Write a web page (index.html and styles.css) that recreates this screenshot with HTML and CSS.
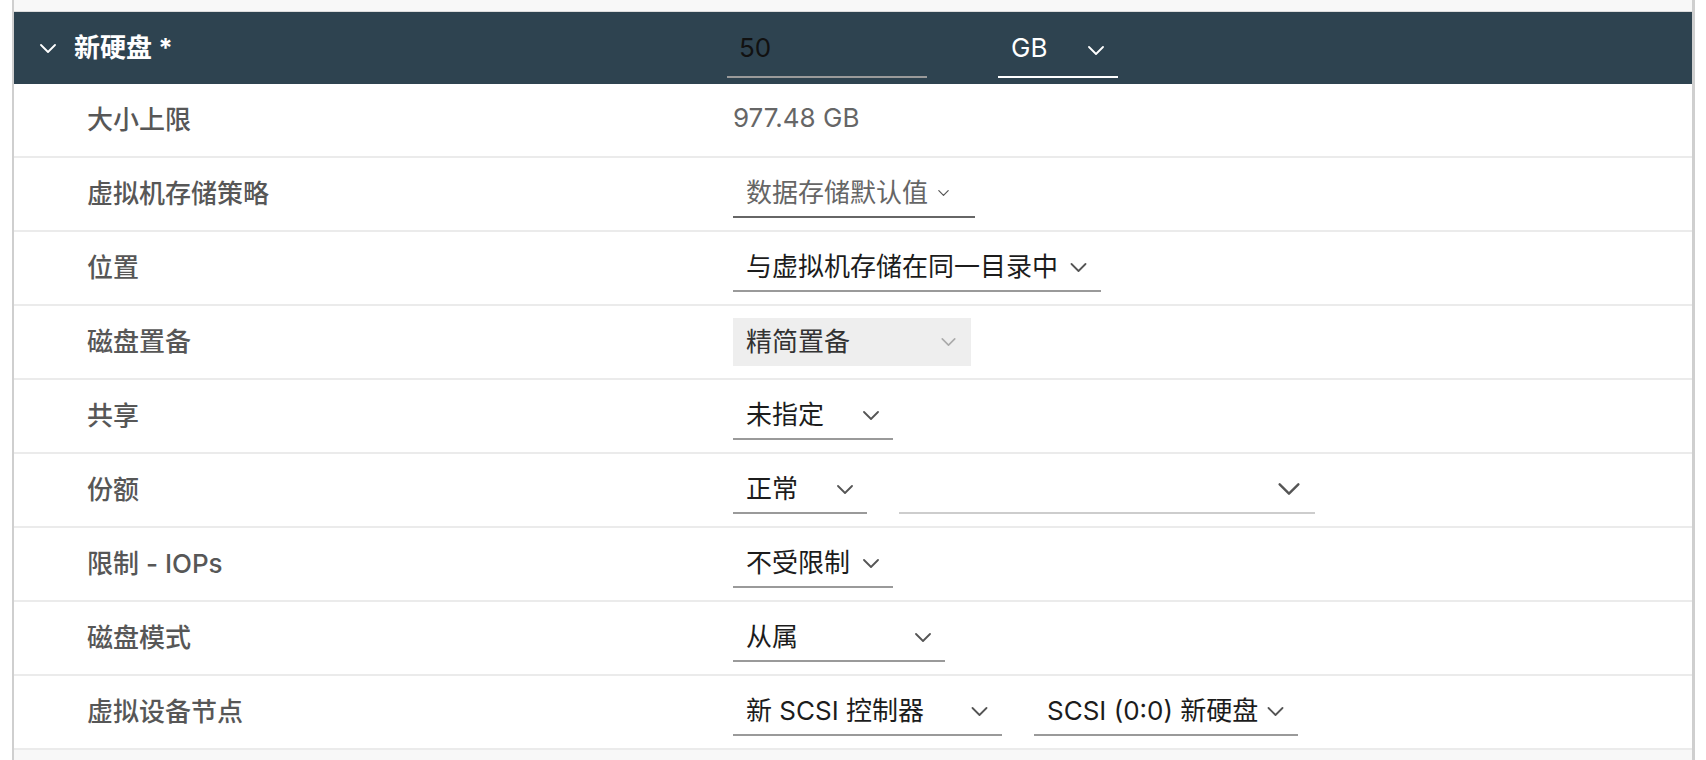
FILE: index.html
```html
<!DOCTYPE html>
<html lang="zh-CN">
<head>
  <meta charset="UTF-8">
  <meta name="viewport" content="width=device-width, initial-scale=1.0">
  <title>新硬盘</title>
  <link rel="stylesheet" href="styles.css">
</head>
<body>
  <div class="frame">
    <div class="disk">
      <!-- 标题行：名称 + 容量 -->
      <div class="disk-head">
        <span class="caret">
          <svg viewBox="0 0 16 9" width="16" height="9"><path d="M1 1 L8 8 L15 1"/></svg>
        </span>
        <span class="disk-title">新硬盘 *</span>
        <div class="size-input"><span>50</span></div>
        <div class="unit-select">
          <span>GB</span>
          <svg class="chev" viewBox="0 0 16 9" width="16" height="9"><path d="M1 1 L8 8 L15 1"/></svg>
        </div>
      </div>

      <div class="row">
        <div class="label">大小上限</div>
        <div class="value plain">977.48 GB</div>
      </div>

      <div class="row">
        <div class="label">虚拟机存储策略</div>
        <div class="value">
          <div class="select policy">
            <span class="muted">数据存储默认值</span>
            <svg class="chev small" viewBox="0 0 16 9" width="11" height="6"><path d="M1 1 L8 8 L15 1"/></svg>
          </div>
        </div>
      </div>

      <div class="row">
        <div class="label">位置</div>
        <div class="value">
          <div class="select w-location">
            <span>与虚拟机存储在同一目录中</span>
            <svg class="chev" viewBox="0 0 16 9" width="17" height="9"><path d="M1 1 L8 8 L15 1"/></svg>
          </div>
        </div>
      </div>

      <div class="row">
        <div class="label">磁盘置备</div>
        <div class="value">
          <div class="select disabled">
            <span>精简置备</span>
            <svg class="chev" viewBox="0 0 16 9" width="15" height="8"><path d="M1 1 L8 8 L15 1"/></svg>
          </div>
        </div>
      </div>

      <div class="row">
        <div class="label">共享</div>
        <div class="value">
          <div class="select w-160">
            <span>未指定</span>
            <svg class="chev" viewBox="0 0 16 9" width="16" height="9"><path d="M1 1 L8 8 L15 1"/></svg>
          </div>
        </div>
      </div>

      <div class="row">
        <div class="label">份额</div>
        <div class="value">
          <div class="select w-134">
            <span>正常</span>
            <svg class="chev" viewBox="0 0 16 9" width="16" height="9"><path d="M1 1 L8 8 L15 1"/></svg>
          </div>
          <div class="select shares-num">
            <span></span>
            <svg class="chev big" viewBox="0 0 16 9" width="22" height="12"><path d="M1 1 L8 8 L15 1"/></svg>
          </div>
        </div>
      </div>

      <div class="row">
        <div class="label">限制 - IOPs</div>
        <div class="value">
          <div class="select w-160">
            <span>不受限制</span>
            <svg class="chev" viewBox="0 0 16 9" width="16" height="9"><path d="M1 1 L8 8 L15 1"/></svg>
          </div>
        </div>
      </div>

      <div class="row">
        <div class="label">磁盘模式</div>
        <div class="value">
          <div class="select w-212">
            <span>从属</span>
            <svg class="chev" viewBox="0 0 16 9" width="16" height="9"><path d="M1 1 L8 8 L15 1"/></svg>
          </div>
        </div>
      </div>

      <div class="row">
        <div class="label">虚拟设备节点</div>
        <div class="value">
          <div class="select w-269">
            <span>新 SCSI 控制器</span>
            <svg class="chev" viewBox="0 0 16 9" width="17" height="9"><path d="M1 1 L8 8 L15 1"/></svg>
          </div>
          <div class="select w-264">
            <span>SCSI (0:0) 新硬盘</span>
            <svg class="chev" viewBox="0 0 16 9" width="17" height="9"><path d="M1 1 L8 8 L15 1"/></svg>
          </div>
        </div>
      </div>
    </div>
  </div>
</body>
</html>
```

FILE: styles.css
```css
*,
*::before,
*::after {
  box-sizing: border-box;
}
body {
  margin: 0;
  background-color: #fff;
  font-family: Inter, "Noto Sans CJK SC", sans-serif;
  font-size: 26px;
  color: #1c1c1c;
}

/* 外框：左右灰色竖线，上下浅灰底 */
.frame {
  margin-left: 12px;
  width: 1683px;
  height: 760px;
  padding-top: 11px;
  border-left: 2px solid #cfcfcf;
  border-right: 3px solid #cfcfcf;
  background-color: #f8f8f8;
}
.disk {
  border-top: 1px solid #dcdcdc;
}

/* 标题行 */
.disk-head {
  display: flex;
  align-items: center;
  height: 72px;
  background-color: #2e4350;
  color: #fff;
}
.caret {
  display: flex;
  margin-left: 26px;
  width: 34px;
}
.caret svg path,
.chev path {
  fill: none;
  stroke: currentColor;
  stroke-width: 1.8;
  stroke-linecap: round;
  stroke-linejoin: round;
}
.disk-title {
  width: 653px;
  margin-bottom: 6px;
  font-weight: 700;
}
.size-input {
  display: flex;
  align-items: center;
  width: 200px;
  height: 48px;
  margin-top: 12px;
  padding-left: 12px;
  border-bottom: 2px solid #9a9a9a;
  color: #111;
}
.size-input span,
.unit-select span {
  margin-bottom: 12px;
}
.unit-select {
  display: flex;
  align-items: center;
  justify-content: space-between;
  width: 120px;
  height: 48px;
  margin-top: 12px;
  margin-left: 71px;
  padding: 0 14px 0 13px;
  border-bottom: 2px solid #fff;
}
.unit-select .chev {
  color: #fff;
  margin-bottom: 6px;
}

/* 普通行 */
.row {
  display: flex;
  align-items: center;
  height: 74px;
  border-bottom: 2px solid #ebebeb;
  background-color: #fff;
}
.label {
  width: 719px;
  padding-left: 73px;
  margin-bottom: 6px;
  color: #575757;
  font-weight: 500;
}
.value {
  display: flex;
  align-items: center;
  gap: 32px;
}
.value.plain {
  margin-bottom: 6px;
  color: #666;
}

/* 下拉框：只有下边框 */
.select {
  display: flex;
  align-items: center;
  justify-content: space-between;
  height: 48px;
  padding: 0 14px 0 13px;
  border-bottom: 2px solid #9a9a9a;
  color: #1c1c1c;
}
.select span {
  margin-bottom: 5px;
}
.chev {
  color: #555;
  flex: none;
}
.select.policy {
  justify-content: flex-start;
  width: 242px;
  border-bottom-color: #666;
}
.select.policy .chev {
  margin-left: 10px;
}
.muted {
  color: #666;
}
.w-location { width: 368px; }
.w-160 { width: 160px; }
.w-134 { width: 134px; }
.w-212 { width: 212px; }
.w-269 { width: 269px; }
.w-264 { width: 264px; }
.select.disabled {
  width: 238px;
  border-bottom: 0;
  background-color: #eeeeee;
  color: #333;
  padding-right: 15px;
}
.select.disabled .chev {
  color: #aaa;
}
.select.shares-num {
  width: 416px;
  border-bottom-color: #cdcdcd;
  padding-right: 15px;
}
```
